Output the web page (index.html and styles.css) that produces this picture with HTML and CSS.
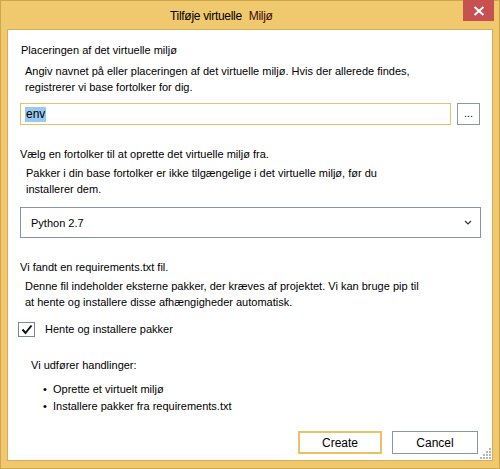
FILE: index.html
```html
<!DOCTYPE html>
<html lang="da">
<head>
<meta charset="utf-8">
<link rel="stylesheet" href="styles.css">
</head>
<body>
<div class="window">
  <div class="titlebar">
    <span class="title">Tilføje virtuelle</span><span class="title-accent">Miljø</span>
    <div class="close">
      <svg width="12" height="10" viewBox="0 0 12 10"><path d="M1.5 1 L10.5 9 M10.5 1 L1.5 9" stroke="#fff" stroke-width="2"/></svg>
    </div>
  </div>
  <div class="client">
    <div class="label l1">Placeringen af det virtuelle miljø</div>
    <div class="desc d1">Angiv navnet på eller placeringen af det virtuelle miljø. Hvis der allerede findes,<br>registrerer vi base fortolker for dig.</div>
    <div class="path-row">
      <div class="input"><span class="sel">env</span></div>
      <div class="browse">...</div>
    </div>
    <div class="label l2">Vælg en fortolker til at oprette det virtuelle miljø fra.</div>
    <div class="desc d2">Pakker i din base fortolker er ikke tilgængelige i det virtuelle miljø, før du<br>installerer dem.</div>
    <div class="select">
      <span>Python 2.7</span>
      <svg width="8" height="5" viewBox="0 0 8 5"><path d="M1 1 L4 4 L7 1" fill="none" stroke="#333" stroke-width="1.2"/></svg>
    </div>
    <div class="label l3">Vi fandt en requirements.txt fil.</div>
    <div class="desc d3">Denne fil indeholder eksterne pakker, der kræves af projektet. Vi kan bruge pip til<br>at hente og installere disse afhængigheder automatisk.</div>
    <div class="check-row">
      <div class="checkbox">
        <svg width="12" height="11" viewBox="0 0 12 11"><path d="M1.5 5.5 L4.5 9 L10.5 1.5" fill="none" stroke="#111" stroke-width="2"/></svg>
      </div>
      <span>Hente og installere pakker</span>
    </div>
    <div class="actions-title">Vi udfører handlinger:</div>
    <div class="actions">
      <div class="action"><span class="bullet">•</span><span>Oprette et virtuelt miljø</span></div>
      <div class="action"><span class="bullet">•</span><span>Installere pakker fra requirements.txt</span></div>
    </div>
    <div class="buttons">
      <div class="btn btn-default">Create</div>
      <div class="btn">Cancel</div>
    </div>
    <svg class="grip" width="11" height="11" viewBox="0 0 11 11">
      <g fill="#b5b5b5">
        <rect x="9" y="0" width="2" height="2"/>
        <rect x="6" y="3" width="2" height="2"/><rect x="9" y="3" width="2" height="2"/>
        <rect x="3" y="6" width="2" height="2"/><rect x="6" y="6" width="2" height="2"/><rect x="9" y="6" width="2" height="2"/>
        <rect x="0" y="9" width="2" height="2"/><rect x="3" y="9" width="2" height="2"/><rect x="6" y="9" width="2" height="2"/><rect x="9" y="9" width="2" height="2"/>
      </g>
    </svg>
  </div>
</div>
</body>
</html>
```
FILE: styles.css
```css
* { box-sizing: border-box; }
html, body { margin: 0; padding: 0; }
body {
  width: 500px;
  height: 469px;
  font-family: "Liberation Sans", Arial, sans-serif;
  font-size: 11px;
  color: #000;
}
.window {
  position: relative;
  width: 500px;
  height: 469px;
  background: #f0c86d;
  border: 1px solid #cfa64c;
  display: flex;
  flex-direction: column;
}
.titlebar {
  height: 28px;
  flex: none;
  display: flex;
  align-items: center;
  padding-left: 169px;
  padding-top: 2px;
  font-size: 12px;
  letter-spacing: -0.3px;
}
.title-accent {
  margin-left: 7px;
  color: #3a0a10;
}
.close {
  position: absolute;
  top: -1px;
  right: 5px;
  width: 31px;
  height: 21px;
  background: #c75050;
  display: flex;
  align-items: center;
  justify-content: center;
}
.client {
  position: relative;
  flex: 1;
  margin: 0 6px 7px 6px;
  background: #fff;
  border: 1px solid #d3ad5b;
  padding: 12px 11px 0 12px;
  line-height: 16px;
}
.label { padding-left: 1px; }
.desc { padding-left: 5px; margin-top: 5px; }
.path-row {
  display: flex;
  gap: 6px;
  margin-top: 8px;
}
.input {
  width: 431px;
  height: 22px;
  border: 1px solid #e6c266;
  padding: 2px 4px;
  display: flex;
  align-items: center;
}
.sel {
  background: #99c9ef;
  font-size: 12px;
  padding: 0 1px;
  line-height: 15px;
}
.browse {
  width: 23px;
  height: 22px;
  border: 1px solid #8a95a5;
  text-align: center;
  line-height: 18px;
}
.l2 { margin-top: 21px; padding-left: 0; }
.d2 { padding-left: 6px; margin-top: 3px; }
.select {
  margin-top: 10px;
  height: 31px;
  border: 1px solid #8793a4;
  display: flex;
  align-items: center;
  justify-content: space-between;
  padding: 0 8px 0 10px;
}
.l3 { margin-top: 21px; padding-left: 0; }
.d3 { margin-top: 3px; }
.check-row {
  display: flex;
  align-items: center;
  gap: 10px;
  margin-top: 11px;
  margin-left: -2px;
}
.checkbox {
  width: 17px;
  height: 15px;
  border: 1px solid #7b8696;
  display: flex;
  align-items: center;
  justify-content: center;
}
.actions-title {
  margin-top: 20px;
  padding-left: 11px;
}
.actions {
  margin-top: 8px;
  padding-left: 23px;
  line-height: 17px;
}
.action {
  display: flex;
}
.bullet {
  width: 10px;
}
.buttons {
  display: flex;
  justify-content: flex-end;
  gap: 10px;
  margin-top: 16px;
  padding-right: 3px;
}
.btn {
  width: 86px;
  height: 23px;
  border: 1px solid #8a95a5;
  display: flex;
  align-items: center;
  justify-content: center;
  font-size: 12px;
}
.btn-default {
  width: 84px;
  border: 2px solid #e8c265;
}
.grip {
  position: absolute;
  right: 1px;
  bottom: 1px;
}
```
